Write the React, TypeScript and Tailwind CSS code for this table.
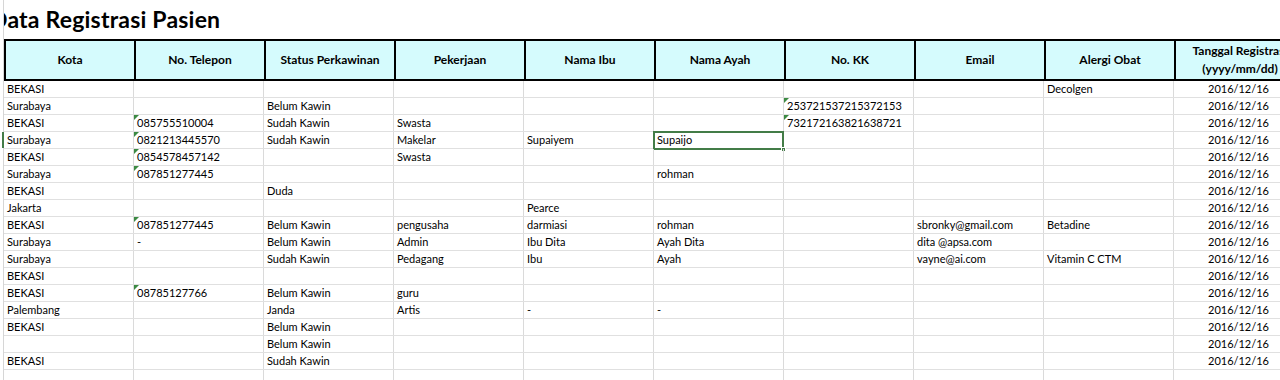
import React from 'react';

type Row = {
  kota?: string;
  telp?: string;
  status?: string;
  kerja?: string;
  ibu?: string;
  ayah?: string;
  kk?: string;
  email?: string;
  alergi?: string;
  tgl?: string;
};

const headers = [
  'Kota',
  'No. Telepon',
  'Status Perkawinan',
  'Pekerjaan',
  'Nama Ibu',
  'Nama Ayah',
  'No. KK',
  'Email',
  'Alergi Obat',
];

const D = '2016/12/16';

const rows: Row[] = [
  { kota: 'BEKASI', alergi: 'Decolgen', tgl: D },
  { kota: 'Surabaya', status: 'Belum Kawin', kk: '253721537215372153', tgl: D },
  { kota: 'BEKASI', telp: '085755510004', status: 'Sudah Kawin', kerja: 'Swasta', kk: '732172163821638721', tgl: D },
  { kota: 'Surabaya', telp: '0821213445570', status: 'Sudah Kawin', kerja: 'Makelar', ibu: 'Supaiyem', ayah: 'Supaijo', tgl: D },
  { kota: 'BEKASI', telp: '0854578457142', kerja: 'Swasta', tgl: D },
  { kota: 'Surabaya', telp: '087851277445', ayah: 'rohman', tgl: D },
  { kota: 'BEKASI', status: 'Duda', tgl: D },
  { kota: 'Jakarta', ibu: 'Pearce', tgl: D },
  { kota: 'BEKASI', telp: '087851277445', status: 'Belum Kawin', kerja: 'pengusaha', ibu: 'darmiasi', ayah: 'rohman', email: 'sbronky@gmail.com', alergi: 'Betadine', tgl: D },
  { kota: 'Surabaya', telp: '-', status: 'Belum Kawin', kerja: 'Admin', ibu: 'Ibu Dita', ayah: 'Ayah Dita', email: 'dita @apsa.com', tgl: D },
  { kota: 'Surabaya', status: 'Sudah Kawin', kerja: 'Pedagang', ibu: 'Ibu', ayah: 'Ayah', email: 'vayne@ai.com', alergi: 'Vitamin C CTM', tgl: D },
  { kota: 'BEKASI', tgl: D },
  { kota: 'BEKASI', telp: '08785127766', status: 'Belum Kawin', kerja: 'guru', tgl: D },
  { kota: 'Palembang', status: 'Janda', kerja: 'Artis', ibu: '-', ayah: '-', tgl: D },
  { kota: 'BEKASI', status: 'Belum Kawin', tgl: D },
  { status: 'Belum Kawin', tgl: D },
  { kota: 'BEKASI', status: 'Sudah Kawin', tgl: D },
  {},
];

const keys: (keyof Row)[] = ['kota', 'telp', 'status', 'kerja', 'ibu', 'ayah', 'kk', 'email', 'alergi'];

// numbers stored as text get the little green marker
const isTextNumber = (key: keyof Row, v?: string) =>
  (key === 'telp' || key === 'kk') && !!v && /^\d+$/.test(v);

function Cell({ value, flag, selected }: { value?: string; flag?: boolean; selected?: boolean }) {
  return (
    <div className="relative h-[16px] border-r border-[#dadada] pl-[3px] text-[11px] leading-[16px] whitespace-nowrap">
      {flag && (
        <span className="absolute top-0 left-0 w-0 h-0 border-t-[5px] border-r-[5px] border-t-[#3c8a43] border-r-transparent" />
      )}
      {value}
      {selected && (
        <div className="absolute -top-px -left-px -right-px -bottom-[2px] border-2 border-[#437c47]">
          <span className="absolute -right-[4px] -bottom-[4px] w-[5px] h-[5px] bg-[#437c47] border border-white" />
        </div>
      )}
    </div>
  );
}

export default function App() {
  return (
    <div className="w-[1280px] h-[380px] overflow-hidden bg-white text-black font-['Lato','Open_Sans',sans-serif]">
      <div className="ml-[3px] h-full border-l border-[#d6d6d6]">
        {/* Title */}
        <div className="h-[39px] flex items-end overflow-hidden">
          <h1 className="-ml-[14px] pb-[8px] text-[23px] font-bold leading-none tracking-[0.2px]">
            Data Registrasi Pasien
          </h1>
        </div>

        <div className="w-max">
          {/* Header */}
          <div className="grid grid-cols-[repeat(10,130px)] h-[42px] border-y-2 border-l-2 border-black bg-[#d5fbfd]">
            {headers.map((h) => (
              <div
                key={h}
                className="flex items-center justify-center border-r-2 border-black text-[12px] font-bold"
              >
                {h}
              </div>
            ))}
            <div className="flex flex-col items-center justify-center border-r-2 border-black text-[12px] font-bold leading-[18px] whitespace-nowrap">
              <span>Tanggal Registrasi</span>
              <span>(yyyy/mm/dd)</span>
            </div>
          </div>

          {/* Rows */}
          {rows.map((r, i) => (
            <div
              key={i}
              className="relative grid grid-cols-[repeat(10,130px)] border-b border-[#e0e0e0]"
            >
              {i === 3 && <span className="absolute -left-[2px] top-0 h-full w-[2px] bg-[#437c47]" />}
              {keys.map((k) => (
                <Cell
                  key={k}
                  value={r[k]}
                  flag={isTextNumber(k, r[k])}
                  selected={i === 3 && k === 'ayah'}
                />
              ))}
              <div className="h-[16px] border-r border-[#dadada] text-center text-[11px] leading-[16px]">
                {r.tgl}
              </div>
            </div>
          ))}
        </div>
      </div>
    </div>
  );
}
